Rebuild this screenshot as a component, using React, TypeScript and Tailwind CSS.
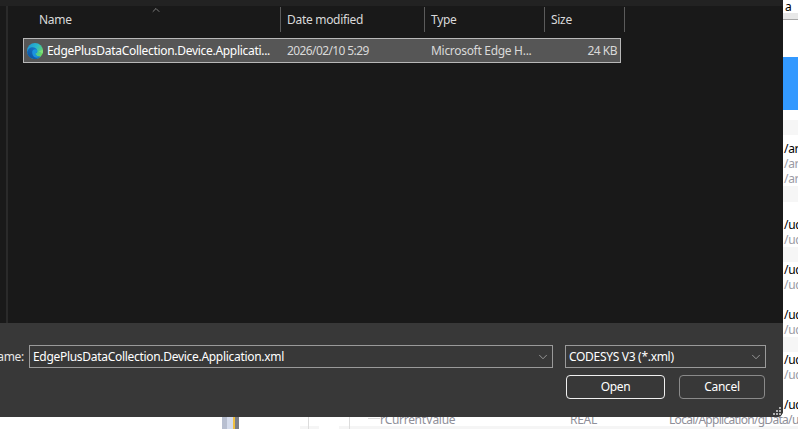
import { ChevronDown, ChevronUp } from "lucide-react"

const font = "font-['Noto_Sans','Open_Sans',sans-serif]"

const EdgeIcon = () => (
  <svg width="16" height="16" viewBox="0 0 16 16" className="shrink-0">
    <defs>
      <linearGradient id="edgeTop" x1="0" y1="0" x2="1" y2="0.6">
        <stop offset="0" stopColor="#1a8fd8" />
        <stop offset="0.55" stopColor="#2bb8c9" />
        <stop offset="1" stopColor="#6fd85a" />
      </linearGradient>
      <linearGradient id="edgeLow" x1="0" y1="1" x2="1" y2="0">
        <stop offset="0" stopColor="#0b4f9e" />
        <stop offset="1" stopColor="#1b7fd0" />
      </linearGradient>
    </defs>
    <circle cx="8" cy="8" r="8" fill="url(#edgeTop)" />
    <path d="M0.2 9.4C0.5 6 3.2 4 6 4.2c3 .2 4.4 2.2 4.2 4.2-.1 1.4-1.2 1.9-2.2 1.9 0 1.6 1.6 3 3.4 3.1 1 .1 1.8-.1 2.4-.5C12.300 15.300 10.200 16 8 16 4 16 .8 13.200.2 9.400z" fill="url(#edgeLow)" />
    <path d="M5.200 9.200c0-2 1.500-3.200 3.300-3 2 .2 2.200 1.800 1.700 2.800-.4.800-1.300 1.300-2.200 1.300 0 1.600 1.600 3 3.400 3.100.8.100 1.600 0 2.300-.3-1.400 1.600-4 2-5.800 1.200-1.800-.9-2.700-3-2.700-5.100z" fill="#1b93e0" />
    <path d="M10.600 8.700c.8-.2 2.400-.1 3.500 1.100.7.800 1.400.9 1.700.3.300-.8.300-2.300-.1-3.500-.5.800-2.500 1.100-5.100 2.100z" fill="#7ee07a" />
  </svg>
)

const Th = ({ label, width }: { label: string; width: string }) => (
  <div className={`${width} h-full border-r border-[#5b5b5b] pl-[6px] flex items-center shrink-0`}>{label}</div>
)

// what shows of the page behind the dialog, right of it
const Dark = ({ text }: { text: string }) => (
  <div className="h-[15px] leading-[15px] pl-px text-black whitespace-nowrap">{text}</div>
)
const Light = ({ text }: { text: string }) => (
  <div className="h-[15px] leading-[15px] pl-px text-[#9a9aa4] whitespace-nowrap">{text}</div>
)

const App = () => {
  return (
    <div className={`w-[798px] h-[429px] overflow-hidden bg-white flex flex-col text-[12px] tracking-[-0.3px] ${font}`}>
      <div className="flex h-[417px] shrink-0 relative z-10">
        {/* dialog */}
        <div className="w-[783px] h-[417px] flex flex-col shrink-0 bg-[#191919] rounded-br-[6px] overflow-hidden text-[#d9d9d9]">
          <div className="h-[6px] bg-[#222222] shrink-0" />
          <div className="flex-1 flex min-h-0">
            <div className="w-[6px] shrink-0" />
            <div className="w-[2px] bg-[#2a2a2a] shrink-0" />
            <div className="flex-1 relative min-w-0">
              <div className="h-[25px] mt-[1px] flex pl-[272px] relative">
                <div className="absolute left-[31px] top-0 h-full flex items-center">Name</div>
                <ChevronUp size={12} strokeWidth={1.2} className="absolute left-[142px] -top-[3px] text-[#bdbdbd]" />
                <div className="w-px h-full bg-[#5b5b5b] shrink-0" />
                <Th label="Date modified" width="w-[144px]" />
                <Th label="Type" width="w-[120px]" />
                <Th label="Size" width="w-[80px]" />
              </div>
              <div className="mt-[6px] ml-[15px] w-[598px] h-[25px] border border-[#b8b8b8] bg-[#565656] flex items-center text-[#d9d9d9]">
                <div className="w-[263px] shrink-0 pl-[3px] flex items-center gap-[4px] text-white whitespace-nowrap">
                  <EdgeIcon />
                  <span>EdgePlusDataCollection.Device.Applicati...</span>
                </div>
                <div className="w-[144px] shrink-0 whitespace-nowrap tracking-[-0.6px]">2026/02/10 5:29</div>
                <div className="w-[120px] shrink-0 whitespace-nowrap">Microsoft Edge H...</div>
                <div className="flex-1 text-right pr-[3px] whitespace-nowrap tracking-[-0.5px]">24 KB</div>
              </div>
            </div>
          </div>
          {/* footer with file name and buttons */}
          <div className="h-[94px] shrink-0 bg-[#383838] relative pt-[22px] text-white">
            <div className="flex items-center h-[23px]">
              <div className="w-[24px] overflow-hidden flex justify-end whitespace-nowrap text-[#e6e6e6]">
                <span>File name:</span>
              </div>
              <div className="ml-[5px] w-[524px] h-[23px] border border-[#9a9a9a] flex items-center justify-between pl-[3px] pr-[2px]">
                <span>EdgePlusDataCollection.Device.Application.xml</span>
                <ChevronDown size={14} strokeWidth={1.2} className="text-[#bdbdbd]" />
              </div>
              <div className="ml-[12px] w-[201px] h-[23px] border border-[#9a9a9a] flex items-center justify-between pl-[3px] pr-[2px]">
                <span>CODESYS V3 (*.xml)</span>
                <ChevronDown size={14} strokeWidth={1.2} className="text-[#bdbdbd]" />
              </div>
            </div>
            <div className="flex mt-[7px] ml-[566px] gap-[14px]">
              <div className="w-[99px] h-[24px] rounded-[4px] border border-[#f0f0f0] flex items-center justify-center">Open</div>
              <div className="w-[86px] h-[24px] rounded-[4px] border border-[#8a8a8a] flex items-center justify-center">Cancel</div>
            </div>
            <svg width="9" height="9" viewBox="0 0 9 9" className="absolute right-[1px] bottom-[1px]">
              <g fill="#b0b0b0">
                <rect x="6" y="0" width="2" height="2" />
                <rect x="3" y="3" width="2" height="2" />
                <rect x="6" y="3" width="2" height="2" />
                <rect x="0" y="6" width="2" height="2" />
                <rect x="3" y="6" width="2" height="2" />
                <rect x="6" y="6" width="2" height="2" />
              </g>
            </svg>
          </div>
        </div>

        {/* page behind, right strip */}
        <div className="flex-1 min-w-0 flex flex-col overflow-hidden">
          <div className="h-[13px] pl-[2px] leading-[13px] text-black">a</div>
          <div className="h-[7px] bg-[#e8e8e8] border-b border-[#a8a8a8]" />
          <div className="h-[37px]" />
          <div className="h-[53px] bg-[#3399ff]" />
          <div className="h-[10px]" />
          <div className="h-[15px] bg-[#f6f6f6]" />
          <div className="h-[6px]" />
          <Dark text="/ar" />
          <Light text="/ar" />
          <Light text="/ar" />
          <div className="h-[16px] bg-[#f6f6f6]" />
          <div className="h-[15px]" />
          <Dark text="/ud" />
          <Light text="/ud" />
          <div className="h-[15px] bg-[#f6f6f6]" />
          <Dark text="/ud" />
          <Light text="/ud" />
          <div className="h-[15px]" />
          <Dark text="/ud" />
          <Light text="/ud" />
          <div className="h-[15px] bg-[#f6f6f6]" />
          <Dark text="/ud" />
          <Light text="/ud" />
          <div className="h-[15px]" />
          <Dark text="/ud" />
        </div>
      </div>

      {/* page behind, bottom strip */}
      <div className="h-[17px] shrink-0 -mt-[5px] relative flex text-[#8f8f99]">
        <div className="absolute left-[300px] w-[19px] bottom-0 h-[3px] bg-[#f5f5f5]" />
        <div className="absolute left-[339px] right-0 bottom-0 h-[3px] bg-[#f5f5f5]" />
        <div className="w-[222px] shrink-0" />
        <div className="w-[17px] h-full flex shrink-0">
          <div className="w-[5px] bg-[#b8bfd0]" />
          <div className="w-[6px] bg-[#d5dcec]" />
          <div className="w-[2px] bg-[#f0c040]" />
          <div className="w-[4px] bg-[#7c7f88]" />
        </div>
        <div className="w-[69px] shrink-0" />
        <div className="w-px h-full bg-[#dcdcdc] shrink-0 relative" />
        <div className="w-[40px] shrink-0" />
        <div className="w-px h-full bg-[#dcdcdc] shrink-0 relative" />
        <div className="w-[18px] shrink-0" />
        <div className="w-[12px] h-[7px] border-b border-[#dcdcdc] shrink-0" />
        <div className="w-[190px] shrink-0 leading-[15px] relative">rCurrentValue</div>
        <div className="w-[99px] shrink-0 leading-[15px] relative">REAL</div>
        <div className="whitespace-nowrap leading-[15px] relative tracking-[-0.7px]">Local/Application/gData/ud</div>
      </div>
    </div>
  )
}

export default App
